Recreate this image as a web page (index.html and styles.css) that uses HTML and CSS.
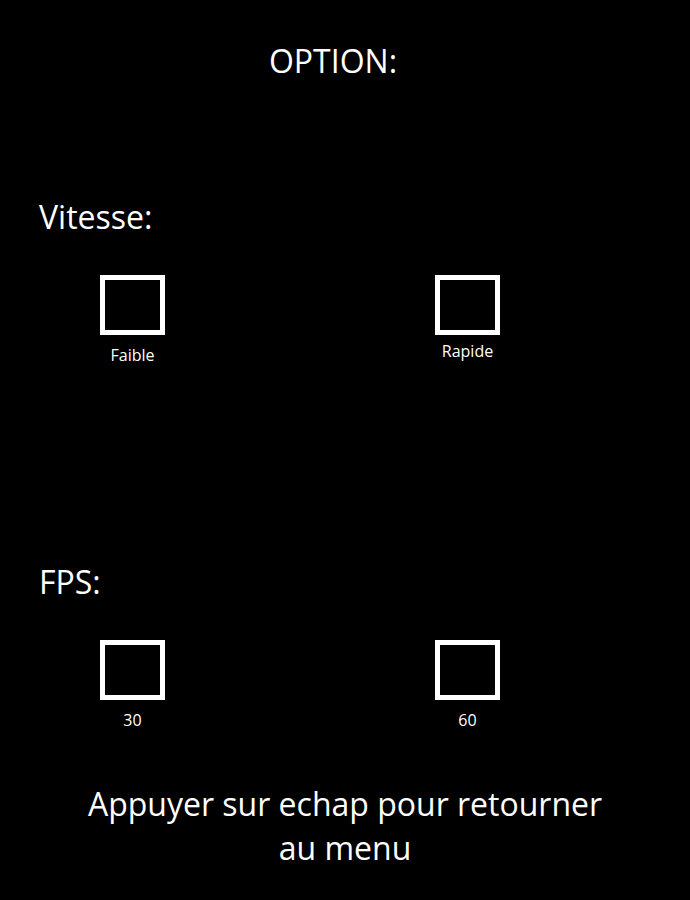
FILE: index.html
```html
<!DOCTYPE html>
<html lang="fr">
<head>
<meta charset="utf-8">
<meta name="viewport" content="width=device-width, initial-scale=1">
<title>Option</title>
<link rel="stylesheet" href="styles.css">
</head>
<body>
<main class="options">
  <h1 class="title">OPTION:</h1>
  <fieldset class="group">
    <legend class="group-name">Vitesse:</legend>
    <div class="choices">
      <label class="choice"><input class="box" type="radio" name="vitesse" value="faible"><span class="choice-name choice-name-low">Faible</span></label>
      <label class="choice"><input class="box" type="radio" name="vitesse" value="rapide"><span class="choice-name">Rapide</span></label>
    </div>
  </fieldset>
  <fieldset class="group">
    <legend class="group-name">FPS:</legend>
    <div class="choices">
      <label class="choice"><input class="box" type="radio" name="fps" value="30"><span class="choice-name choice-name-low">30</span></label>
      <label class="choice"><input class="box" type="radio" name="fps" value="60"><span class="choice-name choice-name-low">60</span></label>
    </div>
  </fieldset>
  <p class="hint">Appuyer sur echap pour retourner<br>au menu</p>
</main>
</body>
</html>
```

FILE: styles.css
```css
* {
  box-sizing: border-box;
}

body {
  margin: 0;
  background: #000;
  color: #fff;
  font-family: "Open Sans", "Noto Sans", sans-serif;
}

.options {
  padding: 39px 0 28px;
}

.title,
.group-name,
.hint {
  margin: 0;
  padding: 0;
  font-size: 32px;
  font-weight: 400;
  line-height: 44px;
}

.title {
  margin-bottom: 112px;
  padding-right: 24px;
  text-align: center;
}

.group {
  min-width: 0;
  margin: 0 0 193px;
  padding: 0 0 0 39px;
  border: 0;
}

.group + .group {
  margin-bottom: 50px;
}

.choices {
  display: grid;
  grid-template-columns: 67fr 51fr;
  padding: 36px 0 0 61px;
}

.choice {
  display: flex;
  flex-direction: column;
  align-items: center;
  justify-self: start;
  width: 65px;
}

.box {
  appearance: none;
  width: 65px;
  height: 60px;
  margin: 0;
  border: 5px solid #fff;
}

.box:checked {
  background: #fff;
}

.choice-name {
  margin-top: 4px;
  font-size: 16px;
  line-height: 24px;
}

.choice-name-low {
  margin-top: 8px;
}

.hint {
  text-align: center;
}
```
